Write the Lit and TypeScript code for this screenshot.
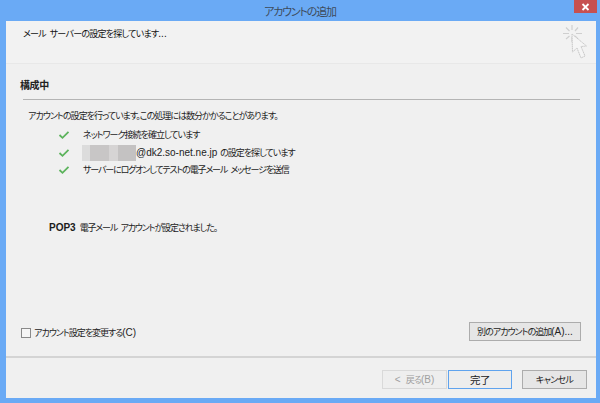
import { LitElement, html, css, svg } from "lit";
import { customElement } from "lit/decorators.js";

const check = svg`<svg class="check" width="14" height="12" viewBox="0 0 14 12"><path d="M2.5 6 L5.5 8.8 L11.5 2.8" fill="none" stroke="#5cb35c" stroke-width="1.8"/></svg>`;

@customElement("app-root")
export class AppRoot extends LitElement {
  static styles = css`
    :host { display: flex; flex-direction: column; width: 600px; height: 403px; overflow: hidden; background: #6aaaf5; color: #1c1c1c;
      font-family: "Noto Sans CJK JP", "Noto Sans", sans-serif; font-size: 9px; letter-spacing: -1px; word-spacing: 2.5px; font-feature-settings: "palt"; line-height: 14px; }
    .title { height: 21px; flex: none; display: flex; justify-content: center; align-items: center; position: relative; font-size: 11px; letter-spacing: -1.2px; color: #3d4a5c; box-sizing: border-box; }
    .close { position: absolute; right: 3px; top: 0; width: 23px; height: 13px; background: #c75050; display: flex; align-items: center; justify-content: center; }
    .win { flex: 1; margin: 0 4px 5px 6px; display: flex; flex-direction: column; background: #f0f0f0; min-height: 0; }
    .head { height: 43px; flex: none; box-sizing: border-box; padding: 6px 0 0 17px; background: #f2f2f2; border-bottom: 1px solid #e8e8e8; display: flex; justify-content: space-between; }
    .head .t { color: #111; letter-spacing: -0.75px; }
    .spark { margin: -3px 7px 0 0; }
    .main { flex: 1; position: relative; display: flex; flex-direction: column; padding: 14px 15px 0 14px; }
    h2 { margin: 0; font-size: 10px; letter-spacing: -0.4px; font-weight: 700; line-height: 14px; color: #222; }
    .rule { height: 1px; background: #b4b4b4; margin: 7px 1px 0 3px; }
    .desc { margin: 9px 0 0 8px; letter-spacing: -0.97px; }
    .steps { display: flex; flex-direction: column; gap: 3.5px; margin: 5px 0 0 37px; }
    .step { display: flex; align-items: center; height: 14px; white-space: pre; }
    .tight { letter-spacing: -1.15px; }
    .check { flex: none; margin-right: 12px; }
    .blur { width: 54px; height: 16px; flex: none; background: linear-gradient(90deg, #dcdcdc 0 14%, #c8c6c6 14% 50%, #d6d4d4 50% 66%, #c4c2c2 66% 100%); margin-left: -1px; }
    .lat { font-family: "Liberation Sans", sans-serif; font-size: 10px; letter-spacing: 0; word-spacing: 0; }
    .pop { margin: 44px 0 0 29px; letter-spacing: -1.15px; }
    .pop b { font-weight: 700; font-family: "Liberation Sans", sans-serif; font-size: 10px; letter-spacing: 0; margin-right: 4px; }
    .row { margin-top: auto; display: flex; justify-content: space-between; align-items: center; padding: 0 0 15px 1px; }
    .chk { display: flex; align-items: center; gap: 3px; position: relative; top: 1px; }
    .box { width: 8px; height: 8px; border: 1px solid #8a8a8a; background: #f6f6f6; }
    .asc { font-family: "Liberation Sans", sans-serif; font-size: 10px; letter-spacing: 0; }
    button { font: inherit; letter-spacing: inherit; word-spacing: inherit; color: #222; height: 19px; box-sizing: border-box; padding: 0; border: 1px solid #acacac; background: #e6e6e6; font-feature-settings: "palt"; white-space: nowrap; }
    .add { width: 112px; }
    .foot { height: 42px; flex: none; box-sizing: border-box; border-top: 2px solid #d4d4d4; display: flex; justify-content: flex-end; padding: 12px 9px 0 0; }
    .back { width: 65px; color: #a0a0a0; background: #eeeeee; border-color: #d9d9d9; }
    .done { width: 64px; margin: 0 10px 0 1px; border-color: #5fa3ee; background: #ededed; font-size: 10.5px; letter-spacing: -0.4px; }
    .cancel { width: 65px; letter-spacing: -0.7px; }
  `;
  render() {
    return html`
      <div class="title">アカウントの追加
        <div class="close"><svg width="9" height="8" viewBox="0 0 9 8"><path d="M1.5 1 L7.5 7 M7.5 1 L1.5 7" stroke="#fff" stroke-width="1.8"/></svg></div>
      </div>
      <div class="win">
        <div class="head">
          <span class="t">メール サーバーの設定を探しています<span class="asc">...</span></span>
          <svg class="spark" width="26" height="36" viewBox="0 0 26 36" fill="none">
            <path d="M9 1V6M9 13V18M0 9.5H6M13 9.5H19M3 3.5L6.5 7M12 12L15 15M15 3.5L12 7M6.5 12L3 15" stroke="#cfcfcf" stroke-width="1.2"/>
            <path d="M9 10 L9.5 28 L14 24 L18 34 L22 32 L18 22.5 L23.5 22 Z" fill="#f5f5f5" stroke="#c8c8c8" stroke-dasharray="1.5 .5"/>
          </svg>
        </div>
        <div class="main">
          <h2>構成中</h2>
          <div class="rule"></div>
          <div class="desc">アカウントの設定を行っています。この処理には数分かかることがあります。</div>
          <div class="steps">
            <div class="step">${check}<span>ネットワーク接続を確立しています</span></div>
            <div class="step">${check}<span class="blur"></span><span><span class="lat">@dk2.so-net.ne.jp </span>の設定を探しています</span></div>
            <div class="step">${check}<span class="tight">サーバーにログオンしてテストの電子メール メッセージを送信</span></div>
          </div>
          <div class="pop"><b>POP3</b>電子メール アカウントが設定されました。</div>
          <div class="row">
            <div class="chk"><span class="box"></span><span>アカウント設定を変更する<span class="asc">(C)</span></span></div>
            <button class="add">別のアカウントの追加<span class="asc">(A)...</span></button>
          </div>
        </div>
        <div class="foot">
          <button class="back"><span class="asc">&lt; </span>戻る<span class="asc">(B)</span></button>
          <button class="done">完了</button>
          <button class="cancel">キャンセル</button>
        </div>
      </div>
    `;
  }
}
